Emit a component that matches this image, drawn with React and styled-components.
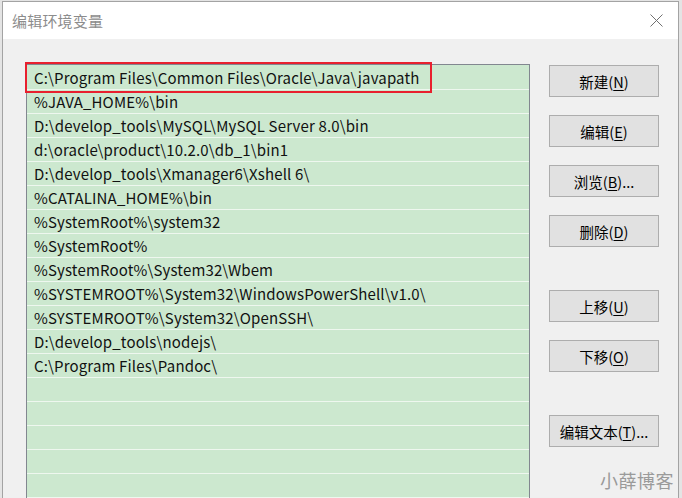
import React from "react"
import styled, { createGlobalStyle } from "styled-components"

const GlobalStyle = createGlobalStyle`
  html, body {
    margin: 0;
    padding: 0;
    background: #dedede;
    overflow: hidden;
  }
  * {
    box-sizing: border-box;
  }
`

const Screen = styled.div`
  position: relative;
  width: 682px;
  height: 498px;
  overflow: hidden;
  padding: 1px 0 0 2px;
  background: #e4e4e4;
  font-family: "Noto Sans CJK SC", "Noto Sans", sans-serif;
`

const Window = styled.div`
  width: 677px;
  height: 540px;
  border: 1px solid #a3a3a3;
  background: #f0f0f0;
  display: flex;
  flex-direction: column;
`

const TitleBar = styled.div`
  height: 37px;
  background: #ffffff;
  display: flex;
  align-items: center;
  justify-content: space-between;
  padding: 0 15px 0 9px;
`

const Title = styled.div`
  font-size: 15px;
  color: #8c8c8c;
  letter-spacing: 0.2px;
`

const CloseIcon = () => (
  <svg width="13" height="13" viewBox="0 0 13 13">
    <path d="M0.5 0.5 L12.5 12.5 M12.5 0.5 L0.5 12.5" stroke="#707070" strokeWidth="1" fill="none" />
  </svg>
)

const Body = styled.div`
  display: flex;
  align-items: flex-start;
  padding: 25px 0 0 23px;
`

const ListBox = styled.div`
  position: relative;
  width: 504px;
  height: 460px;
  border: 1px solid #828790;
  border-bottom: none;
  background: #cce8cf;
  padding-top: 1px;
`

const Row = styled.div`
  height: 24px;
  border-bottom: 1px solid #eef7ef;
  padding-left: 7px;
  line-height: 23px;
  font-size: 15px;
  letter-spacing: 0.15px;
  color: #111;
  white-space: nowrap;
`

const Highlight = styled.div`
  position: absolute;
  left: -2px;
  top: -3px;
  width: 407px;
  height: 31px;
  border: 2px solid #e8202e;
`

const ButtonColumn = styled.div`
  display: flex;
  flex-direction: column;
  margin-left: 19px;
  padding-top: 1px;
`

const Button = styled.div`
  width: 110px;
  height: 32px;
  margin-top: ${p => p.$gap || 0}px;
  background: #e1e1e1;
  border: 1px solid #adadad;
  display: flex;
  align-items: center;
  justify-content: center;
  font-size: 14.5px;
  color: #000;

  & u {
    text-underline-offset: 2px;
  }
`

const Watermark = styled.div`
  position: absolute;
  left: 600px;
  top: 467px;
  font-size: 18px;
  color: #9a9a9a;
  letter-spacing: 0.5px;
`

const paths = [
  "C:\\Program Files\\Common Files\\Oracle\\Java\\javapath",
  "%JAVA_HOME%\\bin",
  "D:\\develop_tools\\MySQL\\MySQL Server 8.0\\bin",
  "d:\\oracle\\product\\10.2.0\\db_1\\bin1",
  "D:\\develop_tools\\Xmanager6\\Xshell 6\\",
  "%CATALINA_HOME%\\bin",
  "%SystemRoot%\\system32",
  "%SystemRoot%",
  "%SystemRoot%\\System32\\Wbem",
  "%SYSTEMROOT%\\System32\\WindowsPowerShell\\v1.0\\",
  "%SYSTEMROOT%\\System32\\OpenSSH\\",
  "D:\\develop_tools\\nodejs\\",
  "C:\\Program Files\\Pandoc\\",
  "", "", "", "", "", "",
]

const buttons = [
  { label: "新建", key: "N", gap: 0 },
  { label: "编辑", key: "E", gap: 18 },
  { label: "浏览", key: "B", gap: 18, more: true },
  { label: "删除", key: "D", gap: 18 },
  { label: "上移", key: "U", gap: 43 },
  { label: "下移", key: "O", gap: 18 },
  { label: "编辑文本", key: "T", gap: 43, more: true },
]

const App = () => (
  <>
    <GlobalStyle />
    <Screen>
      <Window>
        <TitleBar>
          <Title>编辑环境变量</Title>
          <CloseIcon />
        </TitleBar>
        <Body>
          <ListBox>
            {paths.map((p, i) => (
              <Row key={i}>{p}</Row>
            ))}
            <Highlight />
          </ListBox>
          <ButtonColumn>
            {buttons.map(b => (
              <Button key={b.key} $gap={b.gap}>
                {b.label}(<u>{b.key}</u>){b.more ? "..." : ""}
              </Button>
            ))}
          </ButtonColumn>
        </Body>
      </Window>
      <Watermark>小薛博客</Watermark>
    </Screen>
  </>
)

export default App
